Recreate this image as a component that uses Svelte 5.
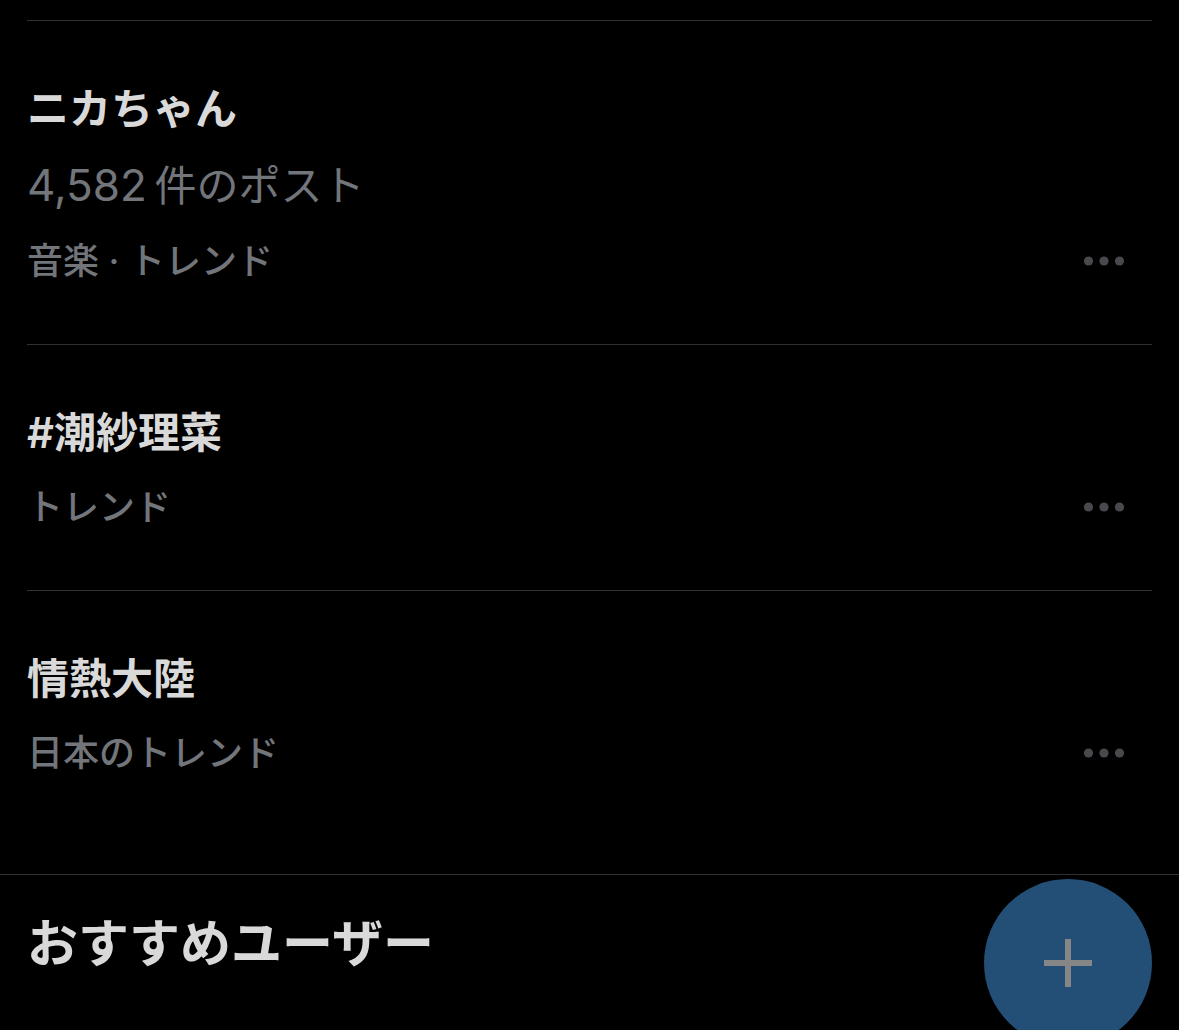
<script lang="ts">
  type Trend = { name: string; count?: string; category: string };

  const trends: Trend[] = [
    { name: 'ニカちゃん', count: '4,582', category: '音楽 · トレンド' },
    { name: '#潮紗理菜', category: 'トレンド' },
    { name: '情熱大陸', category: '日本のトレンド' }
  ];
</script>

<main class="screen">
  <ul class="trends">
    {#each trends as trend}
      <li class="trend">
        <h2 class="name">{trend.name}</h2>
        {#if trend.count}
          <p class="posts"><span class="count">{trend.count}</span>&thinsp;件のポスト</p>
        {/if}
        <div class="meta">
          <span class="category">{trend.category}</span>
          <button class="more" type="button" aria-label="もっと見る">
            <svg width="42" height="10" viewBox="0 0 42 10" aria-hidden="true">
              <circle cx="5.5" cy="5" r="4.6" />
              <circle cx="21" cy="5" r="4.6" />
              <circle cx="36.5" cy="5" r="4.6" />
            </svg>
          </button>
        </div>
      </li>
    {/each}
  </ul>

  <section class="users">
    <h1 class="heading">おすすめユーザー</h1>
  </section>

  <button class="compose" type="button" aria-label="ポストする">
    <svg width="48" height="48" viewBox="0 0 48 48" aria-hidden="true">
      <path d="M24 0v48M0 24h48" />
    </svg>
  </button>
</main>

<style>
  :global(body) {
    margin: 0;
    background: #000;
    overflow: hidden;
  }

  .screen {
    padding-top: 20px;
    color: #d9d9d9;
    font-family: Inter, 'Noto Sans CJK JP', sans-serif;
  }

  .trends {
    margin: 0;
    padding: 0 27px 38px;
    list-style: none;
  }

  .trend {
    padding: 56px 0 54px;
    border-top: 1px solid #2f3133;
  }

  .name {
    margin: 0 0 12px;
    font-size: 42px;
    font-weight: 600;
    line-height: 64px;
  }

  .posts {
    margin: 0 0 12px;
    color: #727579;
    font-size: 42px;
    line-height: 66px;
  }

  .count {
    font-size: 44px;
    line-height: 1;
  }

  .meta {
    display: flex;
    align-items: center;
    justify-content: space-between;
    height: 59px;
    color: #727579;
  }

  .category {
    padding-bottom: 6px;
    font-size: 36px;
    font-weight: 500;
  }

  .more {
    display: flex;
    margin-right: 27px;
    padding: 0;
    border: 0;
    background: none;
    fill: #48494c;
  }

  .users {
    padding: 25px 27px;
    border-top: 1px solid #2f3133;
  }

  .heading {
    margin: 0;
    font-size: 51px;
    font-weight: 700;
    line-height: 88px;
  }

  .compose {
    position: fixed;
    right: 27px;
    bottom: -17px;
    display: flex;
    align-items: center;
    justify-content: center;
    width: 168px;
    height: 168px;
    padding: 0;
    border: 0;
    border-radius: 50%;
    background: #234f77;
  }

  .compose path {
    fill: none;
    stroke: #868686;
    stroke-width: 6;
  }
</style>
